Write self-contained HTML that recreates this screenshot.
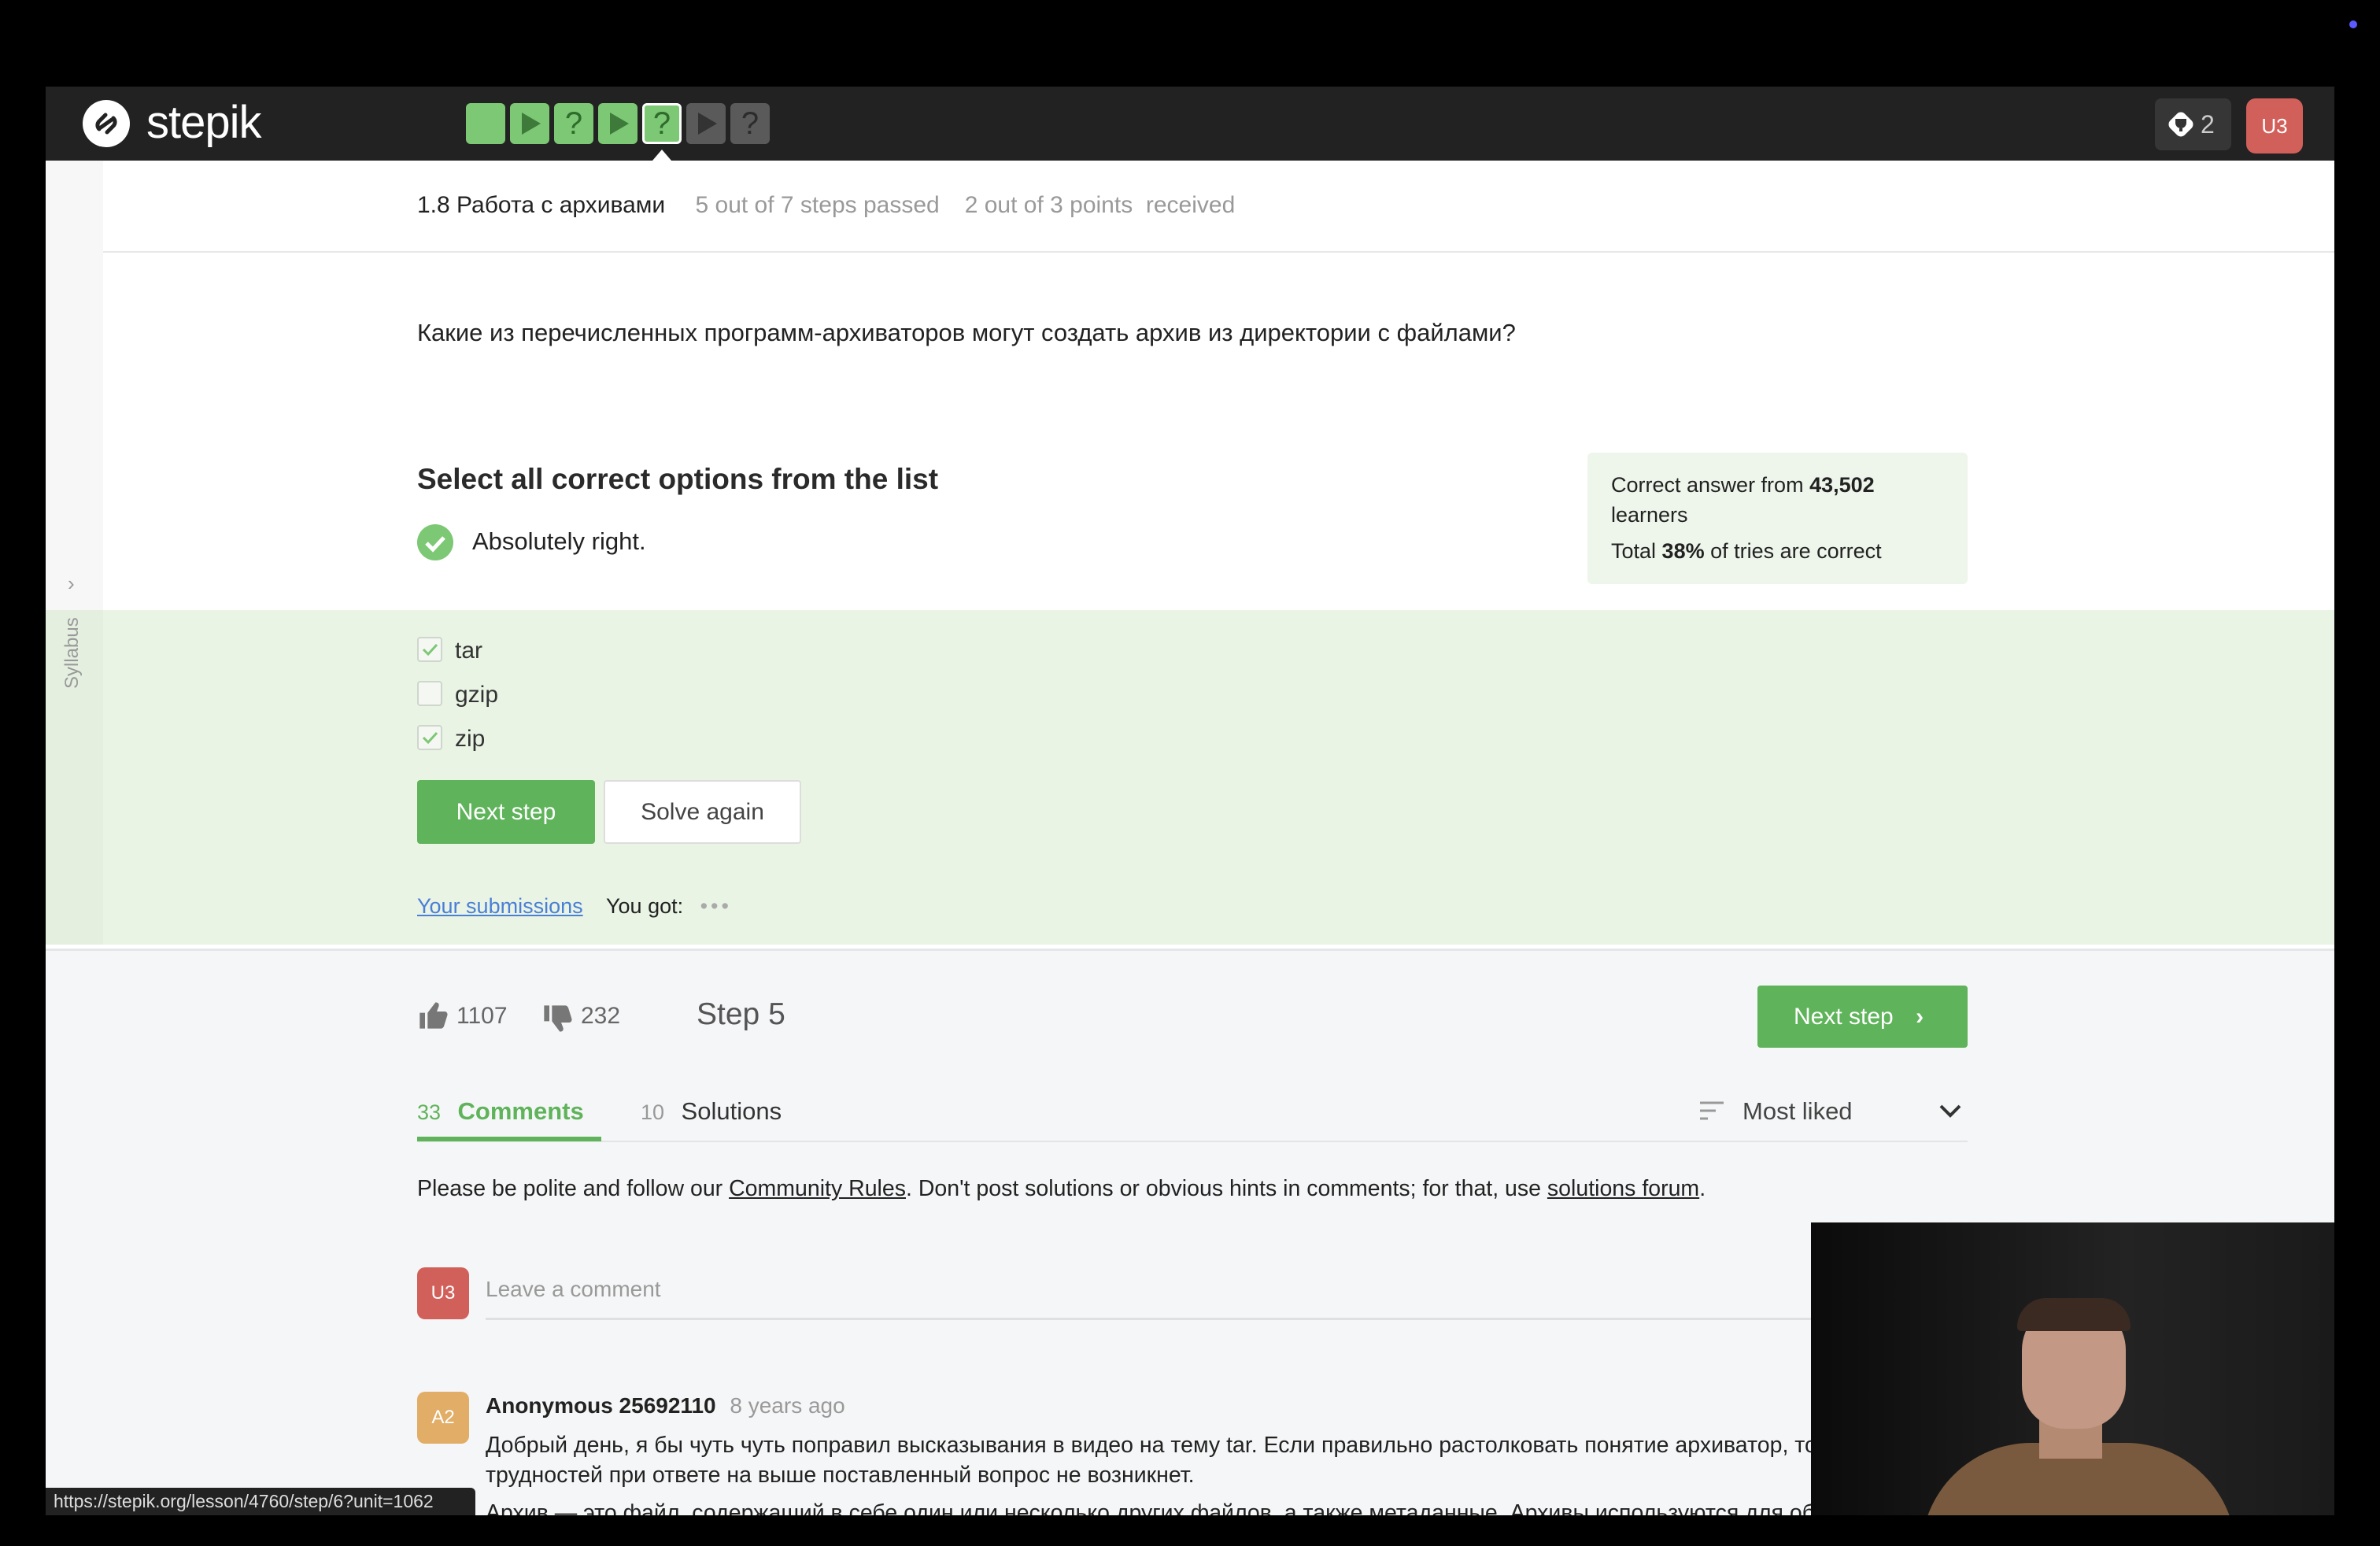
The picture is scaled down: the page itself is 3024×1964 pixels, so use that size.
<!DOCTYPE html>
<html><head><meta charset="utf-8"><style>
*{margin:0;padding:0;box-sizing:border-box}
body{width:3024px;height:1964px;background:#000;position:relative;overflow:hidden;font-family:"Liberation Sans","Noto Sans CJK SC",sans-serif;color:#222}
.a{position:absolute;white-space:nowrap}
.sq{position:absolute;top:21px;width:50px;height:52px;border-radius:6px;background:#7cc874;color:#2f6b2b;font-size:40px;text-align:center;line-height:52px}
.sq.g{background:#5a5a5a;color:#2c2c2c}
.tri{width:0;height:0;border-top:14px solid transparent;border-bottom:14px solid transparent;border-left:24px solid #3e7a39;position:absolute;left:15px;top:12px}
.sq.g .tri{border-left-color:#333}
.cb{position:absolute;left:530px;width:32px;height:32px;border:2px solid #cfd6cc;border-radius:4px;background:#f4f7f2}
</style></head><body>
<div class="a" style="left:2985px;top:26px;width:10px;height:10px;border-radius:50%;background:#5b5bff"></div>
<div class="a" style="left:58px;top:110px;width:2908px;height:1815px;background:#fff;overflow:hidden">
  <div class="a" style="left:0;top:0;width:2908px;height:94px;background:#222"></div>
  <svg class="a" style="left:44px;top:14px" width="66" height="66" viewBox="0 0 66 66"><circle cx="33" cy="33" r="30" fill="#fff"/><path d="M24 40 a7 7 0 0 1 0-10 l8-8 M42 26 a7 7 0 0 1 0 10 l-8 8 M26 38 L40 28" stroke="#222" stroke-width="5" stroke-linecap="round" fill="none"/></svg>
  <div class="a" style="left:128px;top:12px;color:#fff;font-size:58px;letter-spacing:-1px">stepik</div>
  <div class="sq" style="left:534px"></div>
  <div class="sq" style="left:590px"><div class="tri"></div></div>
  <div class="sq" style="left:646px">?</div>
  <div class="sq" style="left:702px"><div class="tri"></div></div>
  <div class="sq" style="left:758px;border:3px solid #fff;line-height:46px">?</div>
  <div class="sq g" style="left:814px"><div class="tri"></div></div>
  <div class="sq g" style="left:870px">?</div>
  <div class="a" style="left:771px;top:80px;border-left:12px solid transparent;border-right:12px solid transparent;border-bottom:14px solid #fff"></div>
  <div class="a" style="left:2680px;top:15px;width:97px;height:66px;background:#363636;border-radius:8px"></div>
  <svg class="a" style="left:2694px;top:29px" width="38" height="38" viewBox="0 0 38 38"><rect x="6" y="6" width="26" height="26" rx="7" transform="rotate(45 19 19)" fill="#fff"/><path d="M12 12h14v5a7 7 0 0 1-14 0z M17 24h4v4h-4z" fill="#333"/></svg>
  <div class="a" style="left:2738px;top:30px;color:#ccc;font-size:32px">2</div>
  <div class="a" style="left:2796px;top:15px;width:72px;height:70px;background:#d2605a;border-radius:12px;color:#fff;font-size:26px;text-align:center;line-height:70px">U3</div>
  <div class="a" style="left:0;top:94px;width:73px;height:996px;background:#f7f7f7"></div>
  <div class="a" style="left:472px;top:134px;font-size:30px;color:#222">1.8 Работа с архивами <span style="color:#999;margin-left:30px">5 out of 7 steps passed</span><span style="color:#999;margin-left:32px">2 out of 3 points&nbsp; received</span></div>
  <div class="a" style="left:73px;top:209px;width:2835px;height:2px;background:#e8e8e8"></div>
  <div class="a" style="left:472px;top:295px;font-size:31px">Какие из перечисленных программ-архиваторов могут создать архив из директории с файлами?</div>
  <div class="a" style="left:472px;top:478px;font-size:37px;font-weight:bold;color:#2a2a2a">Select all correct options from the list</div>
  <svg class="a" style="left:472px;top:556px" width="46" height="46" viewBox="0 0 46 46"><circle cx="23" cy="23" r="23" fill="#7cc874"/><path d="M12 24l8 8 14-15" stroke="#fff" stroke-width="5" fill="none"/></svg>
  <div class="a" style="left:542px;top:560px;font-size:31px">Absolutely right.</div>
  <div class="a" style="left:1959px;top:465px;width:483px;height:167px;background:#eef6eb;border-radius:6px;font-size:27px;line-height:38px;padding:22px 30px;white-space:normal">Correct answer from <b>43,502</b> learners<br><span style="display:inline-block;margin-top:8px">Total <b>38%</b> of tries are correct</span></div>
  <div class="a" style="left:0;top:665px;width:2908px;height:425px;background:#e9f4e5"></div>
  <div class="a" style="left:0;top:665px;width:73px;height:425px;background:#e4efe0"></div>
  <div class="a" style="left:28px;top:616px;color:#999;font-size:26px">›</div>
  <div class="a" style="left:20px;top:765px;color:#999;font-size:24px;transform:rotate(-90deg);transform-origin:left top">Syllabus</div>
  <div class="cb" style="top:699px;left:472px"><svg width="28" height="28" viewBox="0 0 28 28"><path d="M6 14l6 6 11-12" stroke="#7cc874" stroke-width="3" fill="none"/></svg></div>
  <div class="cb" style="top:755px;left:472px"></div>
  <div class="cb" style="top:811px;left:472px"><svg width="28" height="28" viewBox="0 0 28 28"><path d="M6 14l6 6 11-12" stroke="#7cc874" stroke-width="3" fill="none"/></svg></div>
  <div class="a" style="left:520px;top:700px;font-size:30px;color:#333">tar</div>
  <div class="a" style="left:520px;top:756px;font-size:30px;color:#333">gzip</div>
  <div class="a" style="left:520px;top:812px;font-size:30px;color:#333">zip</div>
  <div class="a" style="left:472px;top:881px;width:226px;height:81px;background:#5fb35a;border-radius:4px;color:#fff;font-size:30px;text-align:center;line-height:81px">Next step</div>
  <div class="a" style="left:709px;top:881px;width:251px;height:81px;background:#fff;border:2px solid #ddd;border-radius:4px;color:#444;font-size:30px;text-align:center;line-height:77px">Solve again</div>
  <div class="a" style="left:472px;top:1026px;font-size:27px;color:#4a7fd6;text-decoration:underline">Your submissions</div>
  <div class="a" style="left:712px;top:1026px;font-size:27px;color:#222">You got: <span style="color:#aaa;letter-spacing:4px;margin-left:14px">•••</span></div>
  <div class="a" style="left:0;top:1095px;width:2908px;height:720px;background:#f5f6f7;border-top:3px solid #e4e6e8"></div>
  <svg class="a" style="left:472px;top:1160px" width="40" height="40" viewBox="0 0 24 24"><path d="M2 10h4v12H2zM8 22V10l6-8c2 0 3 1 2.5 3L15 9h6c1.5 0 2.5 1.5 2 3l-2.5 8c-.4 1.2-1.3 2-2.5 2z" fill="#777"/></svg>
  <div class="a" style="left:522px;top:1164px;font-size:30px;color:#666">1107</div>
  <svg class="a" style="left:630px;top:1164px" width="40" height="40" viewBox="0 0 24 24" transform="scale(1,-1)"><path d="M2 10h4v12H2zM8 22V10l6-8c2 0 3 1 2.5 3L15 9h6c1.5 0 2.5 1.5 2 3l-2.5 8c-.4 1.2-1.3 2-2.5 2z" fill="#777"/></svg>
  <div class="a" style="left:680px;top:1164px;font-size:30px;color:#666">232</div>
  <div class="a" style="left:827px;top:1157px;font-size:39px;color:#555">Step 5</div>
  <div class="a" style="left:2175px;top:1142px;width:267px;height:79px;background:#5fb35a;border-radius:4px;color:#fff;font-size:30px;line-height:79px;padding-left:46px">Next step <span style="margin-left:20px;font-weight:bold">›</span></div>
  <div class="a" style="left:472px;top:1284px;font-size:27px;color:#5fb35a">33 <b style="font-size:31px;margin-left:14px">Comments</b></div>
  <div class="a" style="left:756px;top:1284px;font-size:27px;color:#999">10 <span style="font-size:31px;color:#333;margin-left:14px">Solutions</span></div>
  <div class="a" style="left:472px;top:1339px;width:1970px;height:2px;background:#e2e4e6"></div>
  <div class="a" style="left:472px;top:1334px;width:234px;height:6px;background:#5fb35a"></div>
  <svg class="a" style="left:2100px;top:1286px" width="34" height="30"><path d="M2 5h30M2 15h20M2 25h10" stroke="#999" stroke-width="3"/></svg>
  <div class="a" style="left:2156px;top:1284px;font-size:31px;color:#444">Most liked</div>
  <svg class="a" style="left:2404px;top:1290px" width="32" height="24"><path d="M4 5l12 12 12-12" stroke="#333" stroke-width="4" fill="none"/></svg>
  <div class="a" style="left:472px;top:1384px;font-size:28.5px;color:#222">Please be polite and follow our <u>Community Rules</u>. Don't post solutions or obvious hints in comments; for that, use <u>solutions forum</u>.</div>
  <div class="a" style="left:472px;top:1500px;width:66px;height:66px;background:#d2605a;border-radius:10px;color:#fff;font-size:24px;text-align:center;line-height:66px">U3</div>
  <div class="a" style="left:559px;top:1512px;font-size:28px;color:#999">Leave a comment</div>
  <div class="a" style="left:559px;top:1564px;width:1700px;height:3px;background:#e0e0e0"></div>
  <div class="a" style="left:472px;top:1658px;width:66px;height:66px;background:#e1ad67;border-radius:10px;color:#fff;font-size:24px;text-align:center;line-height:66px">A2</div>
  <div class="a" style="left:559px;top:1660px;font-size:28px;color:#222"><b style="font-weight:600">Anonymous 25692110</b> <span style="color:#999;margin-left:10px">8 years ago</span></div>
  <div class="a" style="left:559px;top:1710px;font-size:28.5px;color:#222">Добрый день, я бы чуть чуть поправил высказывания в видео на тему tar. Если правильно растолковать понятие архиватор, то</div>
  <div class="a" style="left:559px;top:1748px;font-size:28.5px;color:#222">трудностей при ответе на выше поставленный вопрос не возникнет.</div>
  <div class="a" style="left:559px;top:1796px;font-size:28.5px;color:#222">Архив — это файл, содержащий в себе один или несколько других файлов, а также метаданные. Архивы используются для объе</div>
  <div class="a" style="left:0;top:1780px;width:546px;height:35px;background:#222;border-radius:0 6px 0 0;color:#ddd;font-size:23px;line-height:35px;padding-left:10px">https://stepik.org/lesson/4760/step/6?unit=1062</div>
  <div class="a" style="left:2243px;top:1443px;width:665px;height:372px;background:linear-gradient(90deg,#0b0b0b,#232323 60%,#1a1a1a);overflow:hidden">
    <div class="a" style="left:140px;top:280px;width:400px;height:140px;border-radius:140px 140px 0 0;background:#7a5a3e"></div>
    <div class="a" style="left:290px;top:230px;width:80px;height:70px;background:#b58a72"></div>
    <div class="a" style="left:268px;top:102px;width:132px;height:160px;border-radius:60px 60px 55px 55px;background:#c39884"></div>
    <div class="a" style="left:262px;top:96px;width:144px;height:42px;border-radius:70px 70px 10px 10px;background:#3a2a22"></div>
  </div>
</div>
</body></html>
